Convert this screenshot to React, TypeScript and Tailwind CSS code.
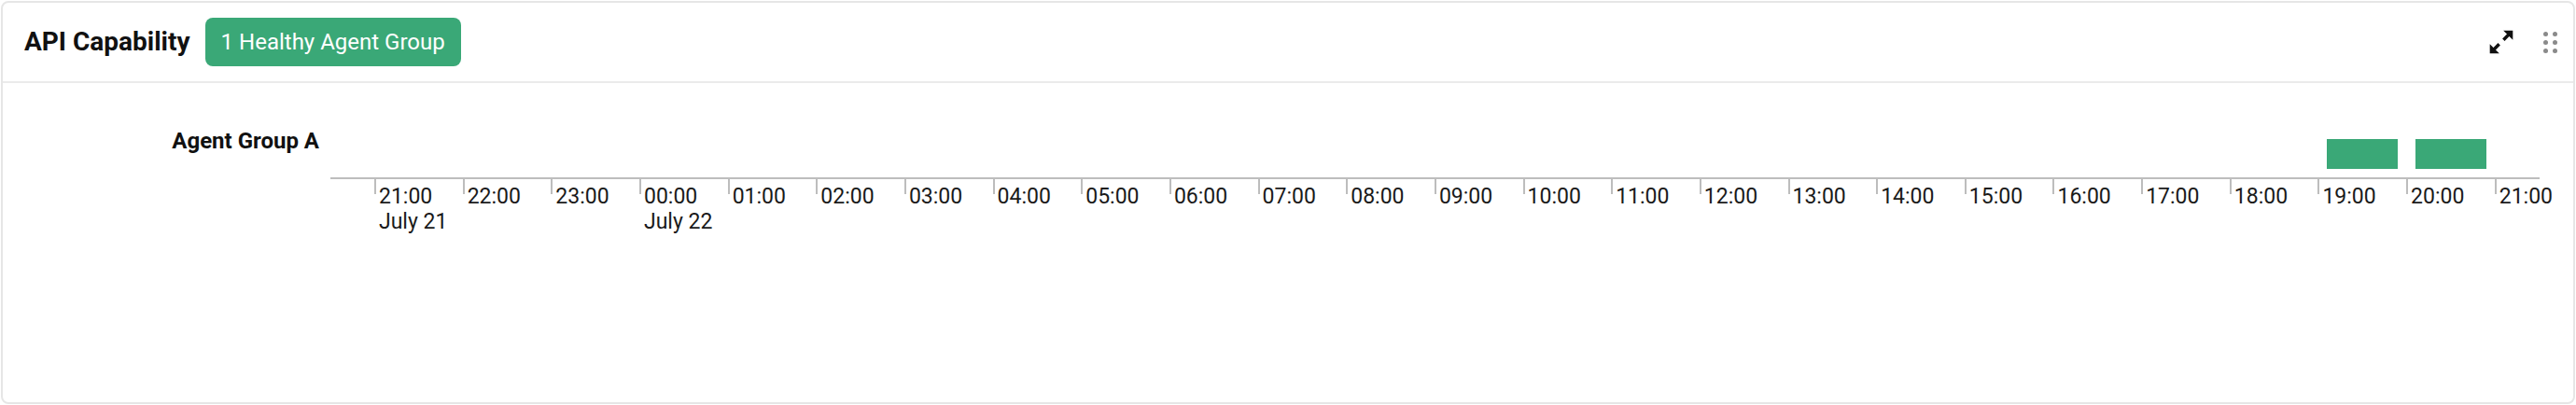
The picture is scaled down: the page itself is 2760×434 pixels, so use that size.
const hours = [
  { label: "21:00", date: "July 21" },
  { label: "22:00" },
  { label: "23:00" },
  { label: "00:00", date: "July 22" },
  { label: "01:00" },
  { label: "02:00" },
  { label: "03:00" },
  { label: "04:00" },
  { label: "05:00" },
  { label: "06:00" },
  { label: "07:00" },
  { label: "08:00" },
  { label: "09:00" },
  { label: "10:00" },
  { label: "11:00" },
  { label: "12:00" },
  { label: "13:00" },
  { label: "14:00" },
  { label: "15:00" },
  { label: "16:00" },
  { label: "17:00" },
  { label: "18:00" },
  { label: "19:00" },
  { label: "20:00" },
  { label: "21:00" },
];

// hour slots (index into hours) that were healthy
const healthySlots = [22, 23];

const ExpandIcon = () => (
  <svg width="26" height="26" viewBox="2.5 2.5 19 19" fill="none">
    <path d="M21 3v7.4L13.6 3z" fill="#111" />
    <path d="M3 21v-7.4l7.4 7.4z" fill="#111" />
    <path d="M17.8 6.2l-4.1 4.1M6.2 17.8l4.1-4.1" stroke="#111" strokeWidth="2.5" strokeLinecap="butt" />
  </svg>
);

const DragHandle = () => (
  <div className="grid grid-cols-2 gap-x-[5px] gap-y-[4px]">
    {Array.from({ length: 6 }).map((_, i) => (
      <span key={i} className="h-[5px] w-[5px] rounded-full bg-[#8a8a8a]" />
    ))}
  </div>
);

export default function App() {
  return (
    <div className="h-[434px] w-[2760px] bg-white p-px font-['Roboto',sans-serif] text-[#111]">
      <div className="flex h-full flex-col rounded-lg border-2 border-[#e6e6e6] bg-white">
        <header className="flex h-[86px] shrink-0 items-center border-b-2 border-[#ebebeb] pl-[23px] pr-[17px]">
          <h2 className="text-[28px] font-bold leading-none">API Capability</h2>
          <span className="ml-4 flex h-[52px] items-center rounded-lg bg-[#3aa877] px-[17px] text-[24px] leading-none text-white">
            1 Healthy Agent Group
          </span>
          <div className="ml-auto flex items-center gap-[32px]">
            <ExpandIcon />
            <DragHandle />
          </div>
        </header>

        <div className="flex items-start">
          <div className="w-[339px] shrink-0 pt-[48px] text-right text-[24px] font-bold leading-[28px]">
            Agent Group A
          </div>
          <div className="ml-[12px] w-[2367px] shrink-0 pt-[60px]">
            <div className="mb-[9px] flex h-[32px] pl-[47px]">
              {hours.map((h, i) => (
                <div key={i} className="h-full w-[94.67px] shrink-0">
                  {healthySlots.includes(i) && <div className="ml-[10px] h-full w-[76px] bg-[#3aa877]" />}
                </div>
              ))}
            </div>
            <div className="flex border-t-2 border-[#bdbdbd] pl-[47px]">
              {hours.map((h, i) => (
                <div key={i} className="flex w-[94.67px] shrink-0">
                  <div className="h-[16px] w-[2px] shrink-0 bg-[#bdbdbd]" />
                  <div className="ml-[3px] pt-[5px] text-[23px] leading-[27px] text-[#1a1a1a]">
                    <div>{h.label}</div>
                    {h.date && <div>{h.date}</div>}
                  </div>
                </div>
              ))}
            </div>
          </div>
        </div>
      </div>
    </div>
  );
}
